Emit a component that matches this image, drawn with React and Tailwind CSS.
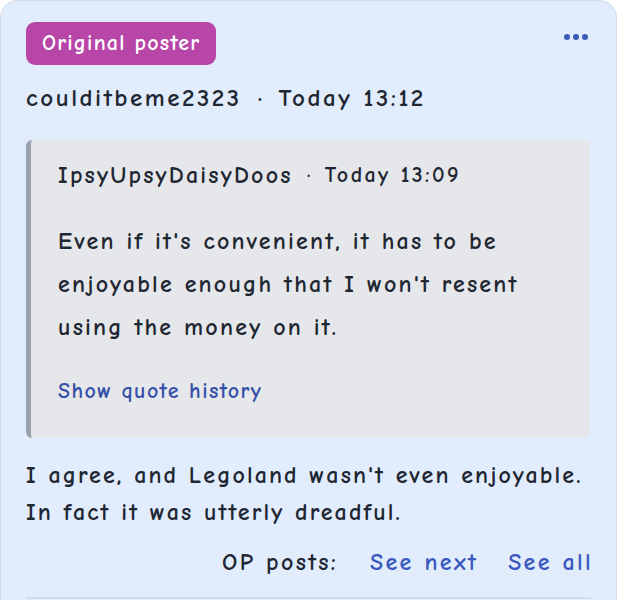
export default function App() {
  return (
    <div
      className="w-[617px] h-[600px] overflow-hidden bg-white"
      style={{ fontFamily: '"Comic Sans MS", "Comic Neue", "DejaVu Sans", sans-serif' }}
    >
      <div className="h-full rounded-t-[18px] border-x border-t border-[#d3dcea] bg-[#e1edfd] px-[25px] pt-[21px] font-bold text-[#1f2733]">
        <div className="flex items-start justify-between">
          <span className="rounded-[9px] bg-[#b846a8] px-[16px] py-[6px] text-[22px] leading-[31px] tracking-[1.2px] text-white">
            Original poster
          </span>
          <button className="mt-[12px] mr-[3px] flex gap-[3px]">
            <span className="h-[6px] w-[6px] rounded-full bg-[#3b5bb8]" />
            <span className="h-[6px] w-[6px] rounded-full bg-[#3b5bb8]" />
            <span className="h-[6px] w-[6px] rounded-full bg-[#3b5bb8]" />
          </button>
        </div>

        <div className="mt-[13px] flex items-center text-[25px] leading-[40px] tracking-[2.5px]">
          <span>coulditbeme2323</span>
          <span className="mx-[16px] tracking-normal">·</span>
          <span>Today 13:12</span>
        </div>

        <div className="mt-[22px] mr-[1px] rounded-[6px] border-l-[5px] border-[#9aa1ad] bg-[#e5e7eb] pl-[27px] pr-5 pt-[17px] pb-[32px]">
          <div className="flex items-center text-[24px] leading-[36px] tracking-[2.2px]">
            <span>IpsyUpsyDaisyDoos</span>
            <span className="mx-[14px] text-[20px] tracking-normal">·</span>
            <span className="text-[22px] tracking-[2.4px]">Today 13:09</span>
          </div>
          <p className="mt-[27px] text-[24px] leading-[43px] tracking-[2.2px]">
            Even if it's convenient, it has to be enjoyable enough that I won't resent using the money on it.
          </p>
          <a className="mt-[27px] block text-[22px] leading-[30px] tracking-[1.4px] text-[#3651a8]">Show quote history</a>
        </div>

        <p className="mt-[19px] text-[24px] leading-[37px] tracking-[2.1px]">
          I agree, and Legoland wasn't even enjoyable. In fact it was utterly dreadful.
        </p>

        <div className="mt-[16px] flex justify-end gap-[32px] text-[24px] leading-[30px] tracking-[2.3px]">
          <span>OP posts:</span>
          <a className="text-[#3a58bd]">See next</a>
          <a className="-ml-[2px] -mr-[2px] text-[#3a58bd]">See all</a>
        </div>

        <div className="mt-[20px] h-[2px] bg-[#d2dbe8]" />
      </div>
    </div>
  )
}
